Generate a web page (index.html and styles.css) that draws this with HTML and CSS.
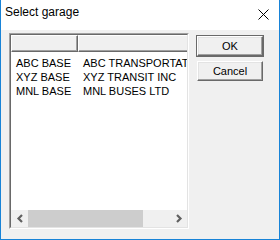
FILE: index.html
```html
<!DOCTYPE html>
<html lang="en">

<head>
  <meta charset="UTF-8" />
  <title>Select garage</title>
  <link rel="stylesheet" href="styles.css">
</head>

<body>
  <div class="dialog">
    <div class="titlebar">
      <span class="title">Select garage</span>
      <svg class="close" width="11" height="11" viewBox="0 0 11 11">
        <path d="M0.5 0.5 L10.5 10.5 M10.5 0.5 L0.5 10.5" stroke="#000" stroke-width="1" />
      </svg>
    </div>
    <div class="client">
      <div class="listview">
        <div class="list-inner">
          <div class="list-scroll">
            <div class="header">
              <div class="col col-code"></div>
              <div class="col col-name"></div>
            </div>
            <ul class="rows">
              <li><span class="col-code">ABC BASE</span><span class="col-name">ABC TRANSPORTAT</span></li>
              <li><span class="col-code">XYZ BASE</span><span class="col-name">XYZ TRANSIT INC</span></li>
              <li><span class="col-code">MNL BASE</span><span class="col-name">MNL BUSES LTD</span></li>
            </ul>
          </div>
          <div class="hscroll">
            <div class="arrow">
              <svg width="8" height="9" viewBox="0 0 8 9"><path d="M6 1 L2.5 4.5 L6 8" stroke="#606060" stroke-width="2.2" fill="none" /></svg>
            </div>
            <div class="thumb"></div>
            <div class="track"></div>
            <div class="arrow">
              <svg width="8" height="9" viewBox="0 0 8 9"><path d="M2 1 L5.5 4.5 L2 8" stroke="#606060" stroke-width="2.2" fill="none" /></svg>
            </div>
          </div>
        </div>
      </div>
      <div class="buttons">
        <button class="btn default">OK</button>
        <button class="btn">Cancel</button>
      </div>
    </div>
  </div>
</body>

</html>
```

FILE: styles.css
```css
* {
  box-sizing: border-box;
}

body {
  margin: 0;
  font-family: "Liberation Sans", Arial, sans-serif;
}

.dialog {
  width: 280px;
  height: 240px;
  border: 1px solid #1883d7;
  border-top: none;
  background: #f0f0f0;
  display: flex;
  flex-direction: column;
}

.titlebar {
  height: 30px;
  background: #fff;
  display: flex;
  align-items: center;
  justify-content: space-between;
  padding: 0 10px 2px 4px;
}

.title {
  font-size: 12px;
  color: #000;
  margin-bottom: 4px;
}

.close {
  display: block;
}

.client {
  flex: 1;
  display: flex;
  padding: 3px 0 0 8px;
}

.listview {
  width: 180px;
  height: 196px;
  border: 1px solid;
  border-color: #a0a0a0 #fff #fff #a0a0a0;
}

.list-inner {
  height: 100%;
  border: 1px solid;
  border-color: #696969 #e3e3e3 #e3e3e3 #696969;
  background: #fff;
  display: flex;
  flex-direction: column;
  overflow: hidden;
}

.list-scroll {
  flex: 1;
  overflow: hidden;
  font-size: 11px;
}

.header {
  display: flex;
  height: 17px;
  width: 240px;
}

.header .col {
  background: #f0f0f0;
  border: 1px solid;
  border-color: #fff #696969 #696969 #fff;
  box-shadow: inset -1px -1px #a0a0a0;
}

.col-code {
  width: 67px;
  flex: none;
}

.col-name {
  flex: 1;
}

.rows {
  margin: 0;
  padding: 4px 0 0 0;
  list-style: none;
}

.rows li {
  display: flex;
  height: 14px;
  line-height: 14px;
  white-space: nowrap;
  color: #000;
}

.rows .col-code {
  padding-left: 5px;
}

.rows .col-name {
  padding-left: 5px;
}

.hscroll {
  height: 17px;
  display: flex;
  background: #f0f0f0;
}

.arrow {
  width: 17px;
  display: flex;
  align-items: center;
  justify-content: center;
}

.thumb {
  width: 115px;
  background: #cdcdcd;
}

.track {
  flex: 1;
}

.buttons {
  display: flex;
  flex-direction: column;
  gap: 5px;
  margin: 3px 0 0 8px;
}

.btn {
  width: 66px;
  height: 20px;
  padding: 0;
  font-family: "Liberation Sans", Arial, sans-serif;
  font-size: 11px;
  color: #000;
  background: #f0f0f0;
  border: 1px solid;
  border-color: #fff #696969 #696969 #fff;
  box-shadow: inset -1px -1px #a0a0a0, inset 1px 1px #e3e3e3;
}

.btn.default {
  outline: 1px solid #696969;
}
```
